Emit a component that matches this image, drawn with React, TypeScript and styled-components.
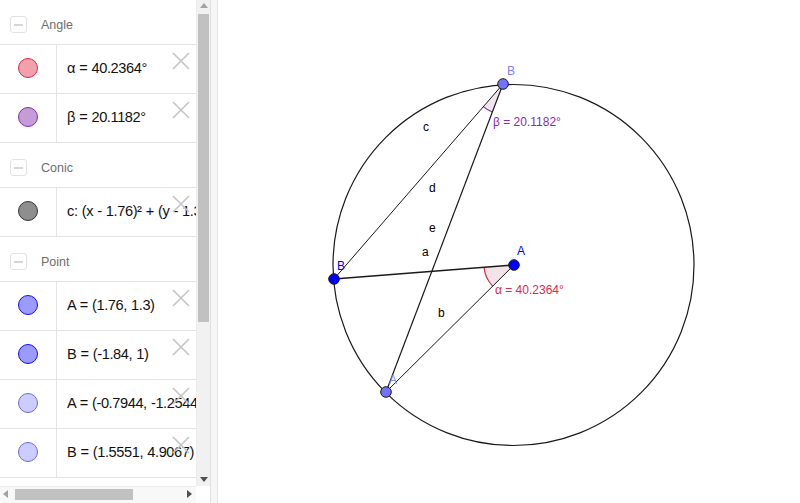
import styled, { createGlobalStyle } from 'styled-components'

const GlobalStyle = createGlobalStyle`
  html, body {
    margin: 0;
    padding: 0;
    background: #fff;
  }
  body {
    font-family: 'Liberation Sans', Arial, sans-serif;
  }
`

type Item = {
  text: string
  fill: string
  stroke: string
}

type Group = {
  title: string
  items: Item[]
}

const groups: Group[] = [
  {
    title: 'Angle',
    items: [
      { text: 'α = 40.2364°', fill: '#f2a0ae', stroke: '#dc2a4c' },
      { text: 'β = 20.1182°', fill: '#c39cd8', stroke: '#8a2ab0' },
    ],
  },
  {
    title: 'Conic',
    items: [{ text: 'c: (x - 1.76)² + (y - 1.3)² = 32.5', fill: '#8e8e8e', stroke: '#333' }],
  },
  {
    title: 'Point',
    items: [
      { text: 'A = (1.76, 1.3)', fill: '#9a9aff', stroke: '#1010ff' },
      { text: 'B = (-1.84, 1)', fill: '#9a9aff', stroke: '#1010ff' },
      { text: 'A = (-0.7944, -1.2544)', fill: '#ccccff', stroke: '#6a6ae0' },
      { text: 'B = (1.5551, 4.9067)', fill: '#ccccff', stroke: '#6a6ae0' },
    ],
  },
]

const Page = styled.div`
  display: flex;
  width: 800px;
  height: 503px;
  overflow: hidden;
`

// MARK: algebra view
const AlgebraPanel = styled.div`
  display: grid;
  grid-template-columns: 196px 14px;
  grid-template-rows: 486px 17px;
  width: 210px;
  flex-shrink: 0;
`

const List = styled.div`
  overflow: hidden;
  background: #fff;
`

const GroupHeader = styled.div`
  box-sizing: border-box;
  display: flex;
  align-items: center;
  height: 45px;
  padding: 5px 0 0 10px;
  border-bottom: 1px solid #e4e4e4;
  gap: 14px;
`

const Toggle = styled.div`
  width: 15px;
  height: 15px;
  border: 1px solid #e2e2e2;
  border-radius: 3px;
  display: flex;
  align-items: center;
  justify-content: center;

  &::after {
    content: '';
    width: 9px;
    height: 2px;
    background: #d6d6d6;
  }
`

const GroupTitle = styled.span`
  font-size: 12.5px;
  color: #6e6e6e;
`

const Row = styled.div`
  position: relative;
  display: flex;
  height: 48px;
  border-bottom: 1px solid #e4e4e4;
`

const MarkerCell = styled.div`
  width: 56px;
  flex-shrink: 0;
  border-right: 1px solid #e4e4e4;
  display: flex;
  align-items: center;
  justify-content: center;
`

const Marker = styled.div<{ $fill: string; $stroke: string }>`
  width: 18px;
  height: 18px;
  border-radius: 50%;
  background: ${(p) => p.$fill};
  border: 1px solid ${(p) => p.$stroke};
  margin: 0 1px 2px 0;
`

const Formula = styled.div`
  display: flex;
  align-items: center;
  padding: 0 0 3px 10px;
  font-size: 14.6px;
  letter-spacing: -0.4px;
  word-spacing: 0.5px;
  color: #111;
  white-space: nowrap;
`

const DeleteButton = styled.svg`
  position: absolute;
  top: 7px;
  left: 172px;
  width: 18px;
  height: 18px;
`

const VScroll = styled.div`
  display: flex;
  flex-direction: column;
  align-items: center;
  background: #f1f1f1;
  border-left: 1px solid #ececec;
`

const Arrow = styled.div<{ $dir: 'up' | 'down' | 'left' | 'right' }>`
  width: 0;
  height: 0;
  border: 4px solid transparent;
  ${(p) =>
    p.$dir === 'up'
      ? 'border-bottom: 5px solid #a3a3a3; border-top-width: 0; margin: 3px 0 6px;'
      : p.$dir === 'down'
        ? 'border-top: 5px solid #505050; border-bottom-width: 0; margin: auto 0 4px;'
        : p.$dir === 'left'
          ? 'border-right: 5px solid #a3a3a3; border-left-width: 0;'
          : 'border-left: 5px solid #505050; border-right-width: 0;'}
`

const VThumb = styled.div`
  width: 11px;
  height: 308px;
  background: #c1c1c1;
`

const HScroll = styled.div`
  display: flex;
  align-items: center;
  gap: 7px;
  padding: 0 4px 2px 3px;
  background: #f8f8f8;
  border-top: 1px solid #ececec;
`

const HTrack = styled.div`
  flex: 1;
  display: flex;
  align-items: center;
`

const HThumb = styled.div`
  width: 118px;
  height: 11px;
  background: #c1c1c1;
`

const Corner = styled.div`
  background: #fff;
`

const Splitter = styled.div`
  width: 6px;
  flex-shrink: 0;
  background: #f6f6f6;
  border-left: 1px solid #e0e0e0;
  border-right: 1px solid #e6e6e6;
`

// MARK: graphics view
const Canvas = styled.svg`
  flex: 1;
  display: block;
  background: #fff;
`

const Label = styled.text<{ $color?: string }>`
  font-family: 'Liberation Sans', Arial, sans-serif;
  font-size: 12px;
  fill: ${(p) => p.$color ?? '#000'};
`

const CloseIcon = () => (
  <DeleteButton viewBox="0 0 18 18">
    <path d="M1 1 L17 17 M17 1 L1 17" stroke="#c4c4c4" strokeWidth="1.6" fill="none" />
  </DeleteButton>
)

const pts = {
  A: { x: 514, y: 265 },
  B: { x: 334, y: 279 },
  A2: { x: 386, y: 392 },
  B2: { x: 503, y: 84 },
}

type Pt = { x: number; y: number }

const wedge = (c: Pt, p: Pt, q: Pt, r: number) => {
  const u = (t: Pt) => {
    const dx = t.x - c.x
    const dy = t.y - c.y
    const l = Math.hypot(dx, dy)
    return { x: c.x + (dx / l) * r, y: c.y + (dy / l) * r }
  }
  const a = u(p)
  const b = u(q)
  return {
    fill: `M${c.x} ${c.y} L${a.x} ${a.y} A${r} ${r} 0 0 0 ${b.x} ${b.y} Z`,
    arc: `M${a.x} ${a.y} A${r} ${r} 0 0 0 ${b.x} ${b.y}`,
  }
}

export default function App() {
  const alpha = wedge(pts.A, pts.B, pts.A2, 30)
  const beta = wedge(pts.B2, pts.B, pts.A2, 30)
  return (
    <>
      <GlobalStyle />
      <Page>
        <AlgebraPanel>
          <List>
            {groups.map((g) => (
              <div key={g.title}>
                <GroupHeader>
                  <Toggle />
                  <GroupTitle>{g.title}</GroupTitle>
                </GroupHeader>
                {g.items.map((it) => (
                  <Row key={it.text}>
                    <MarkerCell>
                      <Marker $fill={it.fill} $stroke={it.stroke} />
                    </MarkerCell>
                    <Formula>{it.text}</Formula>
                    <CloseIcon />
                  </Row>
                ))}
              </div>
            ))}
          </List>
          <VScroll>
            <Arrow $dir="up" />
            <VThumb />
            <Arrow $dir="down" />
          </VScroll>
          <HScroll>
            <Arrow $dir="left" />
            <HTrack>
              <HThumb />
            </HTrack>
            <Arrow $dir="right" />
          </HScroll>
          <Corner />
        </AlgebraPanel>
        <Splitter />
        <Canvas viewBox="218 0 582 503">
          <circle cx="513.5" cy="265" r="180.5" fill="none" stroke="#1a1a1a" strokeWidth="1.2" />
          <path d={alpha.fill} fill="#f0e4e7" />
          <path d={alpha.arc} fill="none" stroke="#dc2a4c" strokeWidth="1.2" />
          <path d={beta.fill} fill="#efe6f2" />
          <path d={beta.arc} fill="none" stroke="#8a2ab0" strokeWidth="1.2" />
          <line x1={pts.B.x} y1={pts.B.y} x2={pts.A.x} y2={pts.A.y} stroke="#1a1a1a" strokeWidth="1.4" />
          <line x1={pts.A.x} y1={pts.A.y} x2={pts.A2.x} y2={pts.A2.y} stroke="#1a1a1a" strokeWidth="1" />
          <line x1={pts.B.x} y1={pts.B.y} x2={pts.B2.x} y2={pts.B2.y} stroke="#1a1a1a" strokeWidth="1" />
          <line x1={pts.B2.x} y1={pts.B2.y} x2={pts.A2.x} y2={pts.A2.y} stroke="#1a1a1a" strokeWidth="1.2" />

          <Label x="423" y="131">c</Label>
          <Label x="429" y="192">d</Label>
          <Label x="429" y="232">e</Label>
          <Label x="422" y="256">a</Label>
          <Label x="438" y="317">b</Label>

          <Label x="493" y="126" $color="#8a2ab0">β = 20.1182°</Label>
          <Label x="495" y="294" $color="#dc2a4c">α = 40.2364°</Label>

          <Label x="517" y="255" $color="#0000ff">A</Label>
          <Label x="337" y="270" $color="#0000ff">B</Label>
          <Label x="389" y="384" $color="#8a8aff">A</Label>
          <Label x="507" y="75" $color="#7f7fff">B</Label>

          <circle cx={pts.A.x} cy={pts.A.y} r="5.3" fill="#0000ff" stroke="#1a1a1a" strokeWidth="1" />
          <circle cx={pts.B.x} cy={pts.B.y} r="5.3" fill="#0000ff" stroke="#1a1a1a" strokeWidth="1" />
          <circle cx={pts.A2.x} cy={pts.A2.y} r="5.3" fill="#7272ff" stroke="#1a1a1a" strokeWidth="1" />
          <circle cx={pts.B2.x} cy={pts.B2.y} r="5.3" fill="#7272ff" stroke="#1a1a1a" strokeWidth="1" />
        </Canvas>
      </Page>
    </>
  )
}
